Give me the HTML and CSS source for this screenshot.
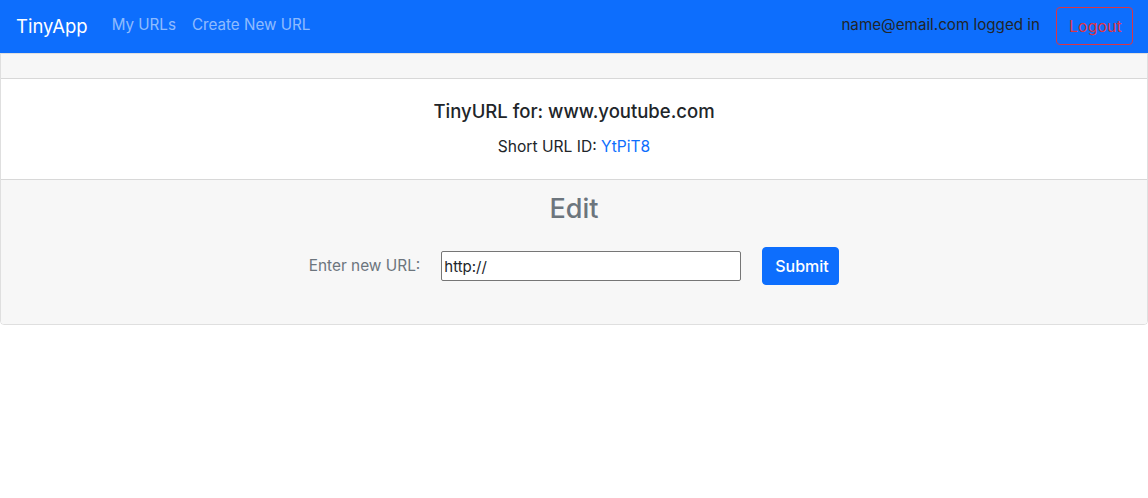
FILE: index.html
```html
<!DOCTYPE html>
<html lang="en">
<head>
<meta charset="utf-8">
<title>TinyApp</title>
<link rel="stylesheet" href="styles.css">
</head>
<body>
<nav class="navbar">
  <a class="brand" href="#">TinyApp</a>
  <div class="nav-links">
    <a class="nav-link" href="#">My URLs</a>
    <a class="nav-link" href="#">Create New URL</a>
  </div>
  <div class="nav-right">
    <span class="user">name@email.com logged in</span>
    <button class="btn-logout" type="button">Logout</button>
  </div>
</nav>
<div class="card">
  <div class="card-header"></div>
  <div class="card-body">
    <h5 class="card-title">TinyURL for: www.youtube.com</h5>
    <p class="card-text">Short URL ID: <a class="link" href="#">YtPiT8</a></p>
  </div>
  <div class="card-footer">
    <h3 class="edit-title">Edit</h3>
    <form class="edit-form">
      <label class="form-label" for="newurl">Enter new URL:</label>
      <input class="url-input" id="newurl" type="text" value="http://">
      <button class="btn-submit" type="button">Submit</button>
    </form>
  </div>
</div>
</body>
</html>
```

FILE: styles.css
```css
* { box-sizing: border-box; }
html, body { margin: 0; padding: 0; }
body {
  font-family: "Inter", "Noto Sans", sans-serif;
  font-size: 16px;
  line-height: 1.5;
  color: #212529;
  background: #fff;
}
a { text-decoration: none; }

.navbar {
  height: 53px;
  background: #0d6efd;
  display: flex;
  align-items: center;
  padding: 0 15px 2px 16px;
}
.brand {
  color: #fff;
  font-size: 18.5px;
  margin-right: 16px;
  line-height: 30px;
}
.nav-links { display: flex; }
.nav-link {
  color: rgba(255, 255, 255, 0.55);
  padding: 8px;
  font-size: 15.2px;
}
.nav-right {
  margin-left: auto;
  display: flex;
  align-items: center;
  gap: 16px;
}
.user { color: #212529; font-size: 15.2px; }
.btn-logout {
  font-family: inherit;
  font-size: 16px;
  line-height: 24px;
  color: #dc3545;
  background: transparent;
  border: 1px solid #dc3545;
  border-radius: 4px;
  padding: 6px 12px;
  height: 38px;
  width: 77px;
}

.card {
  border: 1px solid rgba(0, 0, 0, 0.125);
  border-radius: 0 0 4px 4px;
  overflow: hidden;
}
.card-header {
  height: 25px;
  background: #f7f7f7;
  border-bottom: 1px solid rgba(0, 0, 0, 0.125);
}
.card-body {
  padding: 20px;
  text-align: center;
}
.card-title {
  margin: 0 0 12px;
  font-size: 18.5px;
  font-weight: 500;
  line-height: 24px;
}
.card-text { margin: 0; font-size: 15.6px; line-height: 24px; }
.link { color: #0d6efd; }

.card-footer {
  background: #f7f7f7;
  border-top: 1px solid rgba(0, 0, 0, 0.125);
  padding: 12px 20px 39px;
  color: #6c757d;
  text-align: center;
}
.edit-title {
  margin: 0 0 22px;
  font-size: 27px;
  font-weight: 500;
  line-height: 33px;
}
.edit-form {
  display: flex;
  justify-content: center;
  align-items: center;
  height: 38px;
}
.form-label {
  font-size: 15.4px;
  color: #6c757d;
  margin-right: 21px;
}
.url-input {
  width: 300px;
  height: 30px;
  font-family: inherit;
  font-size: 15px;
  color: #212529;
  border: 1px solid #767676;
  border-radius: 2px;
  padding: 1px 2px;
  background: #fff;
  margin-right: 21px;
}
.btn-submit {
  font-family: inherit;
  font-size: 16px;
  font-weight: 500;
  line-height: 24px;
  color: #fff;
  background: #0d6efd;
  border: 1px solid #0d6efd;
  border-radius: 4px;
  padding: 6px 12px;
  height: 38px;
  width: 77px;
}
```
